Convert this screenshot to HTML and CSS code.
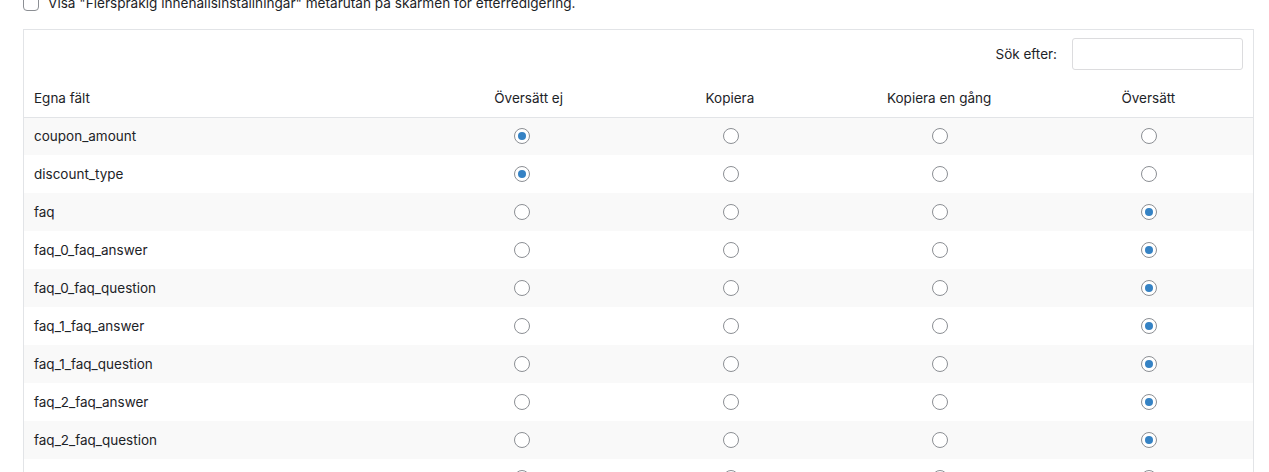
FILE: index.html
```html
<!DOCTYPE html>
<html lang="sv">
<head>
<meta charset="utf-8">
<title>Egna fält</title>
<link rel="stylesheet" href="styles.css">
</head>
<body>
<div class="page">
  <label class="top-option">
    <input type="checkbox" class="check">
    <span>Visa "Flerspråkig innehållsinställningar" metarutan på skärmen för efterredigering.</span>
  </label>

  <div class="panel">
    <div class="search-bar">
      <label class="search-label" for="s">Sök efter:</label>
      <input id="s" class="search-input" type="search">
    </div>
    <table class="fields">
      <thead>
        <tr>
          <th class="name-col">Egna fält</th>
          <th class="opt-col first-opt">Översätt ej</th>
          <th class="opt-col">Kopiera</th>
          <th class="opt-col">Kopiera en gång</th>
          <th class="opt-col">Översätt</th>
        </tr>
      </thead>
      <tbody>
        <tr><td>coupon_amount</td><td><input class="radio" type="radio" name="r1" checked></td><td><input class="radio" type="radio" name="r1"></td><td><input class="radio" type="radio" name="r1"></td><td><input class="radio" type="radio" name="r1"></td></tr>
        <tr><td>discount_type</td><td><input class="radio" type="radio" name="r2" checked></td><td><input class="radio" type="radio" name="r2"></td><td><input class="radio" type="radio" name="r2"></td><td><input class="radio" type="radio" name="r2"></td></tr>
        <tr><td>faq</td><td><input class="radio" type="radio" name="r3"></td><td><input class="radio" type="radio" name="r3"></td><td><input class="radio" type="radio" name="r3"></td><td><input class="radio" type="radio" name="r3" checked></td></tr>
        <tr><td>faq_0_faq_answer</td><td><input class="radio" type="radio" name="r4"></td><td><input class="radio" type="radio" name="r4"></td><td><input class="radio" type="radio" name="r4"></td><td><input class="radio" type="radio" name="r4" checked></td></tr>
        <tr><td>faq_0_faq_question</td><td><input class="radio" type="radio" name="r5"></td><td><input class="radio" type="radio" name="r5"></td><td><input class="radio" type="radio" name="r5"></td><td><input class="radio" type="radio" name="r5" checked></td></tr>
        <tr><td>faq_1_faq_answer</td><td><input class="radio" type="radio" name="r6"></td><td><input class="radio" type="radio" name="r6"></td><td><input class="radio" type="radio" name="r6"></td><td><input class="radio" type="radio" name="r6" checked></td></tr>
        <tr><td>faq_1_faq_question</td><td><input class="radio" type="radio" name="r7"></td><td><input class="radio" type="radio" name="r7"></td><td><input class="radio" type="radio" name="r7"></td><td><input class="radio" type="radio" name="r7" checked></td></tr>
        <tr><td>faq_2_faq_answer</td><td><input class="radio" type="radio" name="r8"></td><td><input class="radio" type="radio" name="r8"></td><td><input class="radio" type="radio" name="r8"></td><td><input class="radio" type="radio" name="r8" checked></td></tr>
        <tr><td>faq_2_faq_question</td><td><input class="radio" type="radio" name="r9"></td><td><input class="radio" type="radio" name="r9"></td><td><input class="radio" type="radio" name="r9"></td><td><input class="radio" type="radio" name="r9" checked></td></tr>
        <tr><td>faq_3_faq_answer</td><td><input class="radio" type="radio" name="r10"></td><td><input class="radio" type="radio" name="r10"></td><td><input class="radio" type="radio" name="r10"></td><td><input class="radio" type="radio" name="r10" checked></td></tr>
      </tbody>
    </table>
  </div>
</div>
</body>
</html>
```

FILE: styles.css
```css
html, body {
  margin: 0;
  padding: 0;
  background: #ffffff;
}

body {
  font-family: Inter, Roboto, "Liberation Sans", sans-serif;
  font-size: 13.5px;
  color: #1d2327;
  overflow: hidden;
}

.page {
  padding: 0 15px 0 23px;
}

.top-option {
  display: flex;
  align-items: center;
  gap: 9px;
  height: 20px;
  margin-top: -7px;
  font-size: 13.6px;
  color: #1d2327;
}

.check {
  appearance: none;
  -webkit-appearance: none;
  margin: 0;
  width: 16px;
  height: 16px;
  border: 1px solid #8c8f94;
  border-radius: 4px;
  background: #fff;
  flex: none;
}

.panel {
  margin-top: 16px;
  border: 1px solid #e2e4e7;
  background: #fff;
}

.search-bar {
  display: flex;
  justify-content: flex-end;
  align-items: center;
  gap: 15px;
  padding: 8px 10px 9px;
}

.search-label {
  font-size: 13.5px;
}

.search-input {
  width: 171px;
  height: 32px;
  box-sizing: border-box;
  margin: 0;
  border: 1px solid #dcdcde;
  border-radius: 3px;
  background: #fff;
  appearance: none;
  -webkit-appearance: none;
}

.fields {
  width: 100%;
  border-collapse: collapse;
  table-layout: fixed;
}

.fields th {
  font-weight: normal;
  height: 38px;
  padding: 0 10px;
  border-bottom: 1px solid #e2e4e7;
  box-sizing: border-box;
}

.name-col {
  width: 392px;
  text-align: left;
}

.opt-col {
  text-align: center;
}

.first-opt {
  padding-left: 26px !important;
}

.fields td {
  height: 38px;
  padding: 0 10px;
  box-sizing: border-box;
  text-align: center;
  vertical-align: middle;
}

.fields td:first-child {
  text-align: left;
}

.fields tbody tr:nth-child(odd) {
  background: #f9f9f9;
}

.radio {
  appearance: none;
  -webkit-appearance: none;
  display: block;
  margin: 0 auto;
  width: 16px;
  height: 16px;
  box-sizing: border-box;
  border: 1px solid #8c8f94;
  border-radius: 50%;
  background: #fff;
  position: relative;
  left: 1px;
}

.radio:checked::before {
  content: "";
  position: absolute;
  left: 3px;
  top: 3px;
  width: 8px;
  height: 8px;
  border-radius: 50%;
  background: #3582c4;
}
```
